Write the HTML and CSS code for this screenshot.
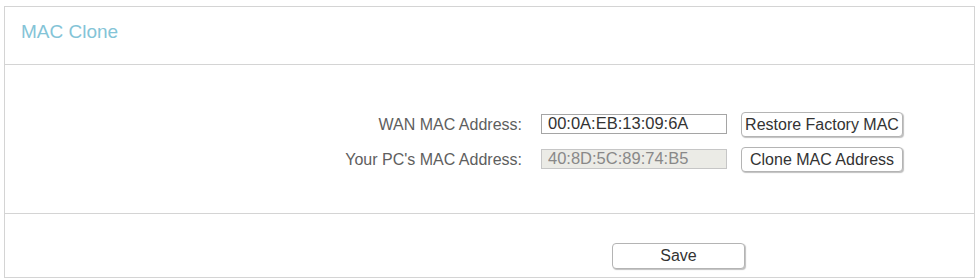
FILE: index.html
```html
<!DOCTYPE html>
<html lang="en">

<head>
  <meta charset="UTF-8">
  <meta name="viewport" content="width=device-width, initial-scale=1.0">
  <title>MAC Clone</title>
  <link rel="stylesheet" href="styles.css">
</head>

<body>
  <div class="panel">
    <div class="panel-head">
      <h3 class="panel-title">MAC Clone</h3>
    </div>
    <div class="panel-body">
      <div class="form-row">
        <label class="form-label" for="wan-mac">WAN MAC Address:</label>
        <input class="text-input" id="wan-mac" type="text" value="00:0A:EB:13:09:6A" />
        <button class="btn" id="restore-btn">Restore Factory MAC</button>
      </div>
      <div class="form-row">
        <label class="form-label" for="pc-mac">Your PC's MAC Address:</label>
        <input class="text-input" id="pc-mac" type="text" value="40:8D:5C:89:74:B5" disabled />
        <button class="btn" id="clone-btn">Clone MAC Address</button>
      </div>
    </div>
    <div class="panel-foot">
      <button class="btn btn-save" id="save-btn">Save</button>
    </div>
  </div>
</body>

</html>
```

FILE: styles.css
```css
html {
  background-color: #fff;
}

body {
  margin: 6px 4px;
  font-family: "Liberation Sans", Arial, sans-serif;
  font-size: 16px;
  color: #555;
}

.panel {
  border: 1px solid #d4d4d4;
}

.panel-head {
  height: 58px;
  box-sizing: border-box;
  padding: 14px 16px 0;
  border-bottom: 1px solid #d4d4d4;
}

.panel-title {
  margin: 0;
  font-size: 19px;
  line-height: 22px;
  font-weight: normal;
  color: #84c4d7;
}

.panel-body {
  padding: 47px 0 41px;
  display: flex;
  flex-direction: column;
  gap: 10px;
  border-bottom: 1px solid #d4d4d4;
}

.form-row {
  display: flex;
  align-items: center;
  height: 25px;
}

.form-label {
  width: 517px;
  text-align: right;
  color: #5e5e5e;
  margin-right: 19px;
}

.text-input {
  box-sizing: border-box;
  width: 186px;
  height: 20px;
  margin: -2px 14px 0 0;
  padding: 0 6px;
  font-family: inherit;
  font-size: 16.5px;
  color: #333;
  border: 1px solid #a5a5a5;
  border-radius: 0;
  background: #fff;
}

.text-input:disabled {
  background: #ebebe6;
  color: #888;
  border-color: #c6c6c6;
}

.btn {
  box-sizing: border-box;
  width: 162px;
  height: 25px;
  padding: 0 2px;
  font-family: inherit;
  font-size: 16px;
  color: #333;
  background: #fff;
  border: 1px solid #b4b4b4;
  border-radius: 4px;
  box-shadow: 1px 1px 1px rgba(0, 0, 0, 0.25);
}

.panel-foot {
  height: 63px;
  box-sizing: border-box;
  padding: 29px 0 0 607px;
}

.btn-save {
  width: 133px;
  height: 26px;
}
```
